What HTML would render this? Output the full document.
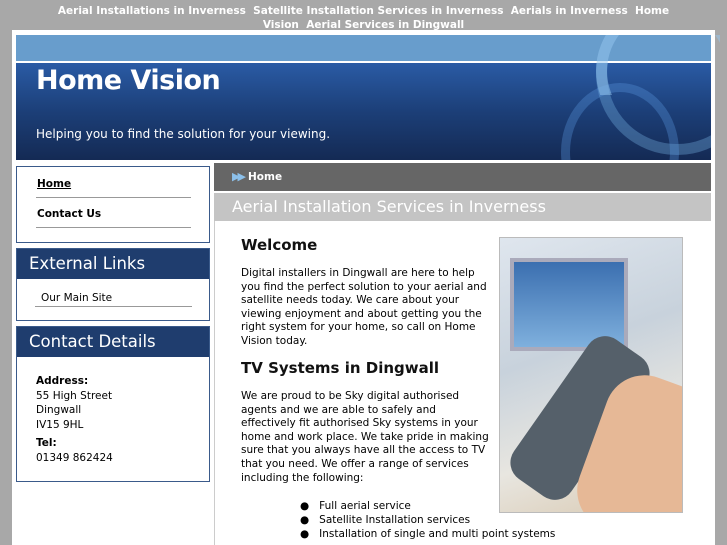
<html><head><style>
body{margin:0;background:#a8a8a8;font-family:"DejaVu Sans","Liberation Sans",sans-serif;width:727px;height:545px;overflow:hidden;position:relative}
.a{position:absolute}
.top{left:0;width:727px;top:4px;text-align:center;color:#fff;font-weight:bold;font-size:10.5px;line-height:14px}
.box{background:#fff;border:1px solid #3a5a8a}
.hd{background:#1f3d6e;color:#fff;font-size:16.5px;padding:5px 12px;height:20px}
.sm{font-size:10.5px;color:#000}
</style></head><body>
<div class="a top">Aerial Installations in Inverness&nbsp; Satellite Installation Services in Inverness&nbsp; Aerials in Inverness&nbsp; Home<br>Vision&nbsp; Aerial Services in Dingwall</div>
<div class="a" style="left:12px;top:30px;width:703px;height:515px;background:#fff"></div>
<div class="a" style="left:16px;top:35px;width:695px;height:26px;background:#689dcc;overflow:hidden"></div>
<div class="a" style="left:16px;top:63px;width:695px;height:97px;background:linear-gradient(#2a5ba5,#1c3f78 50%,#142a54);overflow:hidden">
<div class="a" style="left:580px;top:-70px;width:140px;height:140px;border:11px solid rgba(120,180,230,.35);border-radius:50%"></div>
<div class="a" style="left:545px;top:20px;width:100px;height:120px;border:9px solid rgba(90,150,220,.35);border-radius:50%"></div>
<div class="a" style="left:20px;top:2px;color:#fff;font-weight:bold;font-size:27px;letter-spacing:-0.5px">Home Vision</div>
<div class="a" style="left:20px;top:64px;color:#fff;font-size:12px">Helping you to find the solution for your viewing.</div>
</div>
<div class="a" style="left:580px;top:35px;width:140px;height:60px;overflow:hidden"><div style="margin:-35px 0 0 16px;width:120px;height:120px;border:11px solid rgba(150,200,240,.5);border-radius:50%"></div></div>
<div class="a box" style="left:16px;top:166px;width:192px;height:75px">
<div class="a sm" style="left:20px;top:11px;font-weight:bold;text-decoration:underline">Home</div>
<div class="a" style="left:19px;top:30px;width:155px;border-top:1px solid #999"></div>
<div class="a sm" style="left:20px;top:41px;font-weight:bold">Contact Us</div>
<div class="a" style="left:19px;top:60px;width:155px;border-top:1px solid #999"></div>
</div>
<div class="a box" style="left:16px;top:248px;width:192px;height:71px"><div class="hd">External Links</div>
<div class="a sm" style="left:24px;top:43px">Our Main Site</div><div class="a" style="left:18px;top:57px;width:157px;border-top:1px solid #999"></div></div>
<div class="a box" style="left:16px;top:326px;width:192px;height:154px"><div class="hd">Contact Details</div>
<div class="a sm" style="left:19px;top:47px;line-height:14.5px"><b>Address:</b><br>55 High Street<br>Dingwall<br>IV15 9HL<br><b style="display:block;margin-top:4px">Tel:</b>01349 862424</div></div>
<div class="a" style="left:214px;top:163px;width:497px;height:28px;background:#666"><span class="a" style="left:18px;top:7px;color:#8cc0ea;font-size:11px;letter-spacing:-3px">▶▶</span><span class="a" style="left:34px;top:8px;color:#fff;font-weight:bold;font-size:10.5px">Home</span></div>
<div class="a" style="left:214px;top:193px;width:497px;height:28px;background:#c4c4c4;color:#fff;font-size:16px"><span class="a" style="left:18px;top:4px">Aerial Installation Services in Inverness</span></div>
<div class="a" style="left:214px;top:221px;width:1px;height:324px;background:#ccc"></div>
<div class="a" style="left:241px;top:236px;font-size:15px;font-weight:bold;color:#111">Welcome</div>
<div class="a sm" style="left:241px;top:267px;width:250px;line-height:13.6px">Digital installers in Dingwall are here to help you find the perfect solution to your aerial and satellite needs today. We care about your viewing enjoyment and about getting you the right system for your home, so call on Home Vision today.</div>
<div class="a" style="left:241px;top:359px;font-size:15px;font-weight:bold;color:#111">TV Systems in Dingwall</div>
<div class="a sm" style="left:241px;top:390px;width:250px;line-height:13.6px">We are proud to be Sky digital authorised agents and we are able to safely and effectively fit authorised Sky systems in your home and work place. We take pride in making sure that you always have all the access to TV that you need. We offer a range of services including the following:</div>
<div class="a sm" style="left:300px;top:499px;line-height:14px">●&nbsp;&nbsp;&nbsp;Full aerial service<br>●&nbsp;&nbsp;&nbsp;Satellite Installation services<br>●&nbsp;&nbsp;&nbsp;Installation of single and multi point systems</div>
<div class="a" style="left:499px;top:237px;width:182px;height:274px;border:1px solid #bbb;background:linear-gradient(160deg,#dfe6ee,#c8d2dc 40%,#e8e6e0 70%,#d8c8b0);overflow:hidden">
<div class="a" style="left:10px;top:20px;width:110px;height:85px;background:linear-gradient(#3b6fb0,#7fb0dd);border:4px solid #aab"></div>
<div class="a" style="left:45px;top:95px;width:70px;height:170px;background:#55606a;border-radius:20px;transform:rotate(35deg)"></div>
<div class="a" style="left:90px;top:140px;width:110px;height:160px;background:#e6b896;border-radius:40px;transform:rotate(20deg)"></div>
</div>
</body></html>
